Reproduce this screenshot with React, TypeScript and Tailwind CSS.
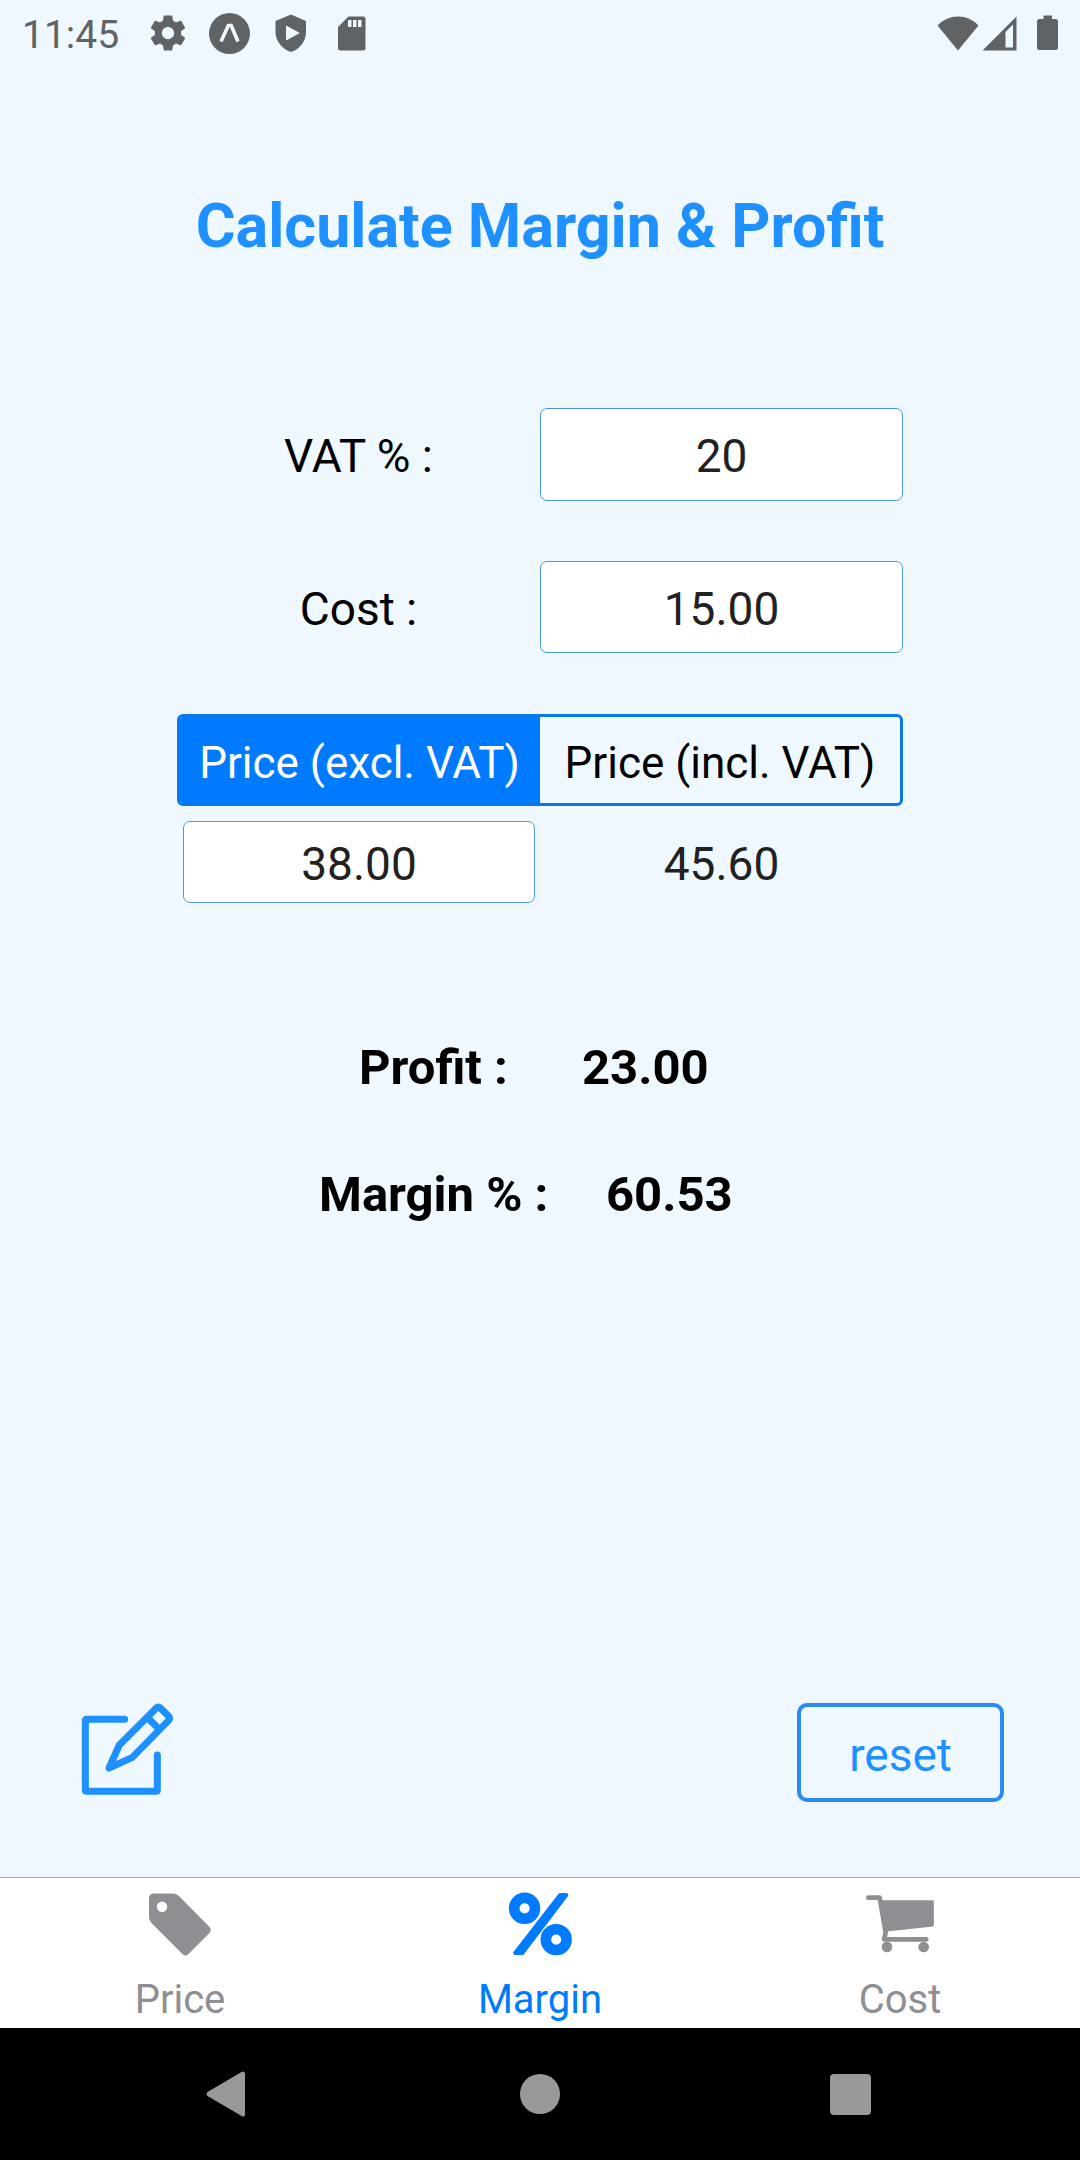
import { useState } from "react";
import type { ReactNode } from "react";

const TABS = [
  { key: "price", label: "Price", icon: <TagIcon /> },
  { key: "margin", label: "Margin", icon: <PercentIcon /> },
  { key: "cost", label: "Cost", icon: <CartIcon /> },
];

function TagIcon() {
  return (
    <svg width="62" height="63" viewBox="0 0 62 63" fill="currentColor">
      <path
        fillRule="evenodd"
        d="M5 0.5H24Q27.5 0.5 30.500 3.500L60.500 34Q63 37 60.500 40L39.500 61Q36.500 64 33.500 61L2.500 30Q0 27 0 24V5.500Q0 0.500 5 0.500ZM13 8.500a5.200 5.200 0 1 0 0 10.400a5.200 5.200 0 1 0 0-10.400Z"
      />
    </svg>
  );
}

function PercentIcon() {
  return (
    <svg width="63" height="64" viewBox="0 0 63 64" fill="none" stroke="currentColor">
      <circle cx="15.600" cy="16.300" r="10.400" strokeWidth="10.600" />
      <circle cx="47.200" cy="47.600" r="10.400" strokeWidth="10.600" />
      <path d="M51.200 3H57.300L13.300 61H6.200Z" fill="currentColor" strokeWidth="4" strokeLinejoin="round" />
    </svg>
  );
}

function CartIcon() {
  return (
    <svg width="69" height="60" viewBox="138 110 207 180" fill="currentColor" stroke="currentColor">
      <path d="M145 121H179L197 226L192 246H319" fill="none" strokeWidth="14" strokeLinecap="round" strokeLinejoin="round" />
      <path d="M180 132H338V204L194 220Z" strokeWidth="7" strokeLinejoin="round" />
      <circle cx="201" cy="269" r="16" stroke="none" />
      <circle cx="311" cy="269" r="16" stroke="none" />
    </svg>
  );
}

function EditIcon() {
  return (
    <svg
      width="95"
      height="95"
      viewBox="60 66 285 285"
      fill="none"
      stroke="currentColor"
      strokeWidth="21"
      strokeLinecap="round"
      strokeLinejoin="round"
    >
      <path d="M194 118H81Q76 118 76 123V329Q76 334 81 334H287Q292 334 292 329V225" />
      <path d="M147 264L178 195L289 84Q295 79 301 84L326 109Q331 115 326 121L217 232Z" />
      <path d="M266 116L297 147" />
    </svg>
  );
}

function StatusBar() {
  return (
    <div className="flex h-[66px] items-center justify-between pr-[22px] pl-[22px] text-[#5f6365]">
      <div className="flex items-center">
        <span className="w-[98px] pt-[3px] text-[39px] leading-[44px]">11:45</span>
        <svg className="ml-[27px]" width="42" height="42" viewBox="0 0 24 24" fill="currentColor">
          <path d="M19.430 12.980c.04-.32.07-.64.07-.98s-.03-.66-.07-.98l2.110-1.650c.19-.15.24-.42.12-.64l-2-3.460c-.12-.22-.39-.3-.61-.22l-2.490 1c-.52-.4-1.080-.73-1.690-.98l-.38-2.650C14.460 2.180 14.250 2 14 2h-4c-.25 0-.46.18-.49.42l-.38 2.650c-.61.25-1.170.59-1.690.98l-2.490-1c-.23-.09-.49 0-.61.22l-2 3.460c-.13.22-.07.49.12.64l2.110 1.650c-.04.32-.07.65-.07.98s.03.66.07.98l-2.110 1.650c-.19.15-.24.42-.12.64l2 3.460c.12.22.39.3.61.22l2.490-1c.52.4 1.080.73 1.690.98l.38 2.650c.03.24.24.42.49.42h4c.25 0 .46-.18.49-.42l.38-2.650c.61-.25 1.170-.59 1.690-.98l2.490 1c.23.09.49 0 .61-.22l2-3.460c.12-.22.07-.49-.12-.64l-2.110-1.650zM12 15.500c-1.930 0-3.500-1.570-3.500-3.500s1.570-3.500 3.500-3.500 3.500 1.570 3.500 3.500-1.570 3.500-3.500 3.500z" />
        </svg>
        <svg className="ml-[20px]" width="41" height="41" viewBox="0 0 41 41">
          <circle cx="20.500" cy="20.500" r="20.500" fill="currentColor" />
          <path d="M12 28.500L19.300 12.500H22.200L29 28.500" fill="none" stroke="#f0f8ff" strokeWidth="3.600" />
        </svg>
        <svg className="ml-[25px]" width="32" height="38" viewBox="0 0 32 38">
          <path d="M16 0.500L31 7V18C31 27 25 35 16 38C7 35 0.500 27 0.500 18V7Z" fill="currentColor" />
          <path d="M11 12.500Q11 11.500 12 12L24 18.500Q25 19 24 19.500L12 26Q11 26.500 11 25.500Z" fill="#f0f8ff" />
        </svg>
        <svg className="ml-[31px]" width="28" height="35" viewBox="0 0 28 35">
          <path d="M10.500 0.500H25Q27.500 0.500 27.500 3V32Q27.500 34.500 25 34.500H2.500Q0 34.500 0 32V11Z" fill="currentColor" />
          <path d="M10 4h3.500v7H10zM15 4h3.500v7H15zM20 4h3.500v7H20z" fill="#f0f8ff" />
        </svg>
      </div>
      <div className="flex items-center">
        <svg width="42" height="35" viewBox="0 0 42 35" fill="currentColor">
          <path d="M0.500 9.500Q9 0.500 21 0.500T41.500 9.500L21 34.500Z" />
        </svg>
        <svg className="ml-[3px]" width="35" height="35" viewBox="0 0 35 35" fill="currentColor">
          <path fillRule="evenodd" d="M34.500 0.500V34.500H0.500ZM31 8.500L23.500 16V31.500H31Z" />
        </svg>
        <svg className="ml-[20px]" width="21" height="36" viewBox="0 0 21 36" fill="currentColor">
          <path d="M6.500 0.500H15V4H18.500Q21 4 21 6.500V32.500Q21 35 18.500 35H2.500Q0 35 0 32.500V6.500Q0 4 2.500 4H6.500Z" />
        </svg>
      </div>
    </div>
  );
}

function Field({ label, height, children }: { label: string; height: string; children: ReactNode }) {
  return (
    <div className={`mx-auto flex w-[726px] ${height}`}>
      <div className="flex flex-1 items-center justify-center pt-[3px]">{label}</div>
      <div className="flex w-[363px] items-center justify-center rounded-[7px] border border-[#4a98e0] bg-white pt-[3px] text-[#212121]">
        {children}
      </div>
    </div>
  );
}

export default function App() {
  const [active, setActive] = useState("margin");

  return (
    <div className="flex h-[2160px] w-[1080px] flex-col overflow-hidden bg-[#f0f8ff] font-['Roboto',sans-serif] text-black">
      <StatusBar />

      <main className="flex flex-1 flex-col text-[46px] leading-[54px]">
        <h1 className="mt-[124px] text-center text-[61px] leading-[72px] font-bold text-[#1e90ff]">
          Calculate Margin &amp; Profit
        </h1>

        <div className="mt-[146px] flex flex-col gap-[60px]">
          <Field label="VAT % :" height="h-[93px]">20</Field>
          <Field label="Cost :" height="h-[92px]">15.00</Field>
        </div>

        <div className="mx-auto mt-[61px] flex h-[92px] w-[726px] overflow-hidden rounded-[6px] border-[3px] border-[#0a78e8] text-[44px]">
          <button type="button" className="w-[360px] bg-[#007aff] pt-[5px] pr-[1px] text-white">
            Price (excl. VAT)
          </button>
          <button type="button" className="flex-1 pt-[5px]">
            Price (incl. VAT)
          </button>
        </div>
        <div className="mx-auto mt-[15px] flex h-[82px] w-[726px] text-[#212121]">
          <div className="ml-[6px] flex w-[352px] items-center justify-center rounded-[7px] border border-[#4a98e0] bg-white pt-[3px]">
            38.00
          </div>
          <div className="ml-[5px] flex flex-1 items-center justify-center pt-[3px]">45.60</div>
        </div>

        <div className="mt-[135px] flex h-[60px] items-center pl-[359px] text-[49px] font-bold">
          <span className="w-[223px]">Profit :</span>
          <span>23.00</span>
        </div>
        <div className="mt-[67px] flex h-[60px] items-center pl-[319px] text-[49px] font-bold">
          <span className="w-[287px]">Margin % :</span>
          <span>60.53</span>
        </div>

        <div className="mt-auto mb-[75px] flex items-start justify-between pr-[76px] pl-[80px] text-[#1e90ff]">
          <EditIcon />
          <button
            type="button"
            className="mt-[1px] h-[99px] w-[207px] rounded-[10px] border-4 border-[#2a8cf0] pt-[5px] text-[46px] leading-[54px]"
          >
            reset
          </button>
        </div>
      </main>

      <nav className="flex h-[151px] border-t border-[#a0a8b0] bg-white">
        {TABS.map(({ key, label, icon }) => (
          <button
            key={key}
            type="button"
            onClick={() => setActive(key)}
            className={`flex flex-1 flex-col items-center pt-[14px] ${
              active === key ? "text-[#007aff]" : "text-[#8e8e93]"
            }`}
          >
            <span className="flex h-[64px] items-center">{icon}</span>
            <span className="mt-[20px] text-[40px] leading-[48px]">{label}</span>
          </button>
        ))}
      </nav>

      <div className="flex h-[132px] items-center bg-black pl-[206px] text-[#999]">
        <svg width="39" height="46" viewBox="0 0 39 46" fill="currentColor">
          <path d="M36 0.800Q39 -0.500 39 3V43Q39 46.500 36 45.200L1.500 25Q-0.500 23 1.500 21Z" />
        </svg>
        <div className="ml-[275px] size-[40px] rounded-full bg-[#999]" />
        <div className="ml-[270px] size-[41px] rounded-[4px] bg-[#999]" />
      </div>
    </div>
  );
}
